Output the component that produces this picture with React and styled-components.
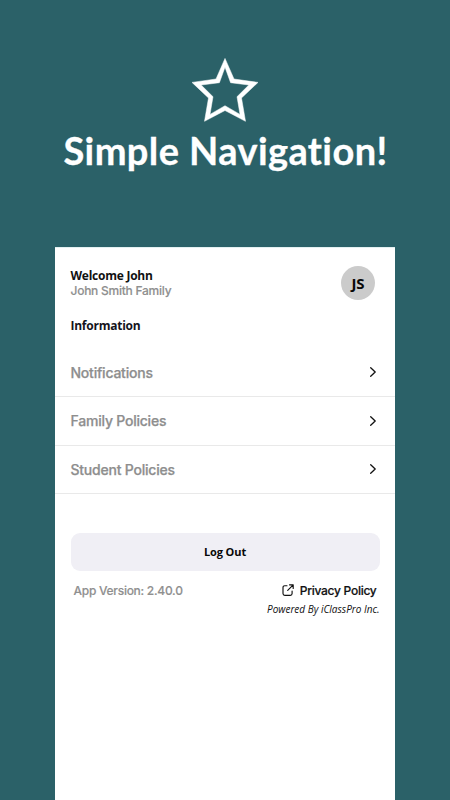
import styled, { createGlobalStyle } from "styled-components";

const GlobalStyle = createGlobalStyle`
    * {
        box-sizing: border-box;
    }
    body {
        margin: 0;
        background-color: #2b6168;
        font-family: "Open Sans", sans-serif;
    }
`;

const Page = styled.main`
    display: flex;
    flex-direction: column;
    align-items: center;
    height: 800px;
    overflow: hidden;
    background-color: #2b6168;
`;

const Hero = styled.header`
    display: flex;
    flex-direction: column;
    align-items: center;
    height: 247px;
    padding-top: 57px;
    color: #fff;
`;

const Title = styled.h1`
    margin: 4px 0 0;
    padding-left: 1px;
    font-family: Lato, sans-serif;
    font-size: 38px;
    font-weight: 700;
    line-height: 46px;
    letter-spacing: 0.4px;
    white-space: nowrap;
    -webkit-text-stroke: 0.3px #fff;
`;

const Panel = styled.section`
    width: 340px;
    flex: 1;
    background-color: #fff;
    border-top: 1px solid #e3f0f1;
`;

const Account = styled.div`
    display: flex;
    justify-content: space-between;
    height: 70px;
    padding: 17px 20px 0 15.5px;
`;

const Welcome = styled.div`
    padding-top: 3px;
    color: #111;
    font-size: 12px;
    font-weight: 700;
    line-height: 16px;
    letter-spacing: -0.25px;
`;

const Family = styled.div`
    color: #8f8f8f;
    font-family: Inter, sans-serif;
    font-size: 12px;
    font-weight: 500;
    line-height: 14px;
    letter-spacing: -0.25px;
    -webkit-text-stroke: 0.15px #8f8f8f;
`;

const Avatar = styled.div`
    display: flex;
    align-items: center;
    justify-content: center;
    width: 34px;
    height: 34px;
    margin-top: 0.5px;
    border-radius: 50%;
    background-color: #cbcbcb;
    color: #080808;
    font-size: 15px;
    font-weight: 700;
`;

const SectionTitle = styled.h2`
    margin: 0;
    padding-left: 15.5px;
    color: #14141c;
    font-size: 12px;
    font-weight: 700;
    line-height: 16px;
    letter-spacing: -0.25px;
`;

const Menu = styled.nav`
    margin-top: 14px;
`;

const MenuRow = styled.a`
    display: flex;
    align-items: center;
    justify-content: space-between;
    height: ${(props) => props.$height}px;
    padding: 0 18px 0 15.5px;
    border-bottom: 1px solid #e9e9e9;
    color: #8e8e8e;
    font-family: Inter, sans-serif;
    font-size: 14px;
    font-weight: 500;
    line-height: 17px;
    letter-spacing: -0.22px;
    -webkit-text-stroke: 0.25px #8e8e8e;
`;

const LogOut = styled.button`
    display: block;
    width: 309px;
    height: 38px;
    margin: 39px 0 0 16px;
    padding: 0 1px 2px 0;
    border: 0;
    border-radius: 9px;
    background-color: #f0eff5;
    color: #080808;
    font-family: "Open Sans", sans-serif;
    font-size: 11px;
    font-weight: 700;
    letter-spacing: -0.1px;
`;

const Footer = styled.footer`
    padding: 10px 15.5px 0 18.5px;
`;

const FooterRow = styled.div`
    display: flex;
    align-items: center;
    justify-content: space-between;
    height: 18px;
    padding-right: 3px;
    font-family: Inter, sans-serif;
    font-size: 12px;
    font-weight: 500;
    letter-spacing: -0.27px;
`;

const Version = styled.span`
    color: #8f8f8f;
    -webkit-text-stroke: 0.15px #8f8f8f;
`;

const Policy = styled.a`
    display: flex;
    align-items: center;
    gap: 6px;
    color: #111;
    -webkit-text-stroke: 0.2px #111;
`;

const Powered = styled.div`
    margin-top: 3px;
    color: #111;
    font-size: 10px;
    font-style: italic;
    line-height: 14px;
    text-align: right;
`;

function Star() {
    return (
        <svg width="68" height="66" viewBox="0 0 68 66" fill="currentColor">
            <path
                fillRule="evenodd"
                stroke="currentColor"
                strokeWidth="0.5"
                d="M34 1.4 43 22 67 25.4 50.5 41 54.5 64.3 34 53.5 13.5 64.3 17.5 41 1 25.4 25 22ZM34 10.2 28.4 25.7 10.2 28 22 39.7 19 57.4 34 48.7 49 57.4 46 39.7 57.8 28 39.6 25.7Z"
            />
        </svg>
    );
}

function Chevron() {
    return (
        <svg width="8" height="12" viewBox="0 0 8 12" fill="none">
            <path
                d="M1.7 1.7 6.2 6 1.7 10.3"
                stroke="#111"
                strokeWidth="1.3"
                strokeLinecap="round"
                strokeLinejoin="round"
            />
        </svg>
    );
}

function ExternalLink() {
    return (
        <svg
            width="12"
            height="12"
            viewBox="0 0 12 12"
            fill="none"
            stroke="#111"
            strokeWidth="1.15"
            strokeLinecap="round"
            strokeLinejoin="round"
        >
            <path d="M5 1.7H2.8Q1 1.7 1 3.5V9.5Q1 11.3 2.8 11.3H8.3Q10.1 11.3 10.1 9.5V7" />
            <path d="M7.5.8H11.2V4.5M11.2.8 5.7 6.3" />
        </svg>
    );
}

const menuItems = [
    { label: "Notifications", height: 49 },
    { label: "Family Policies", height: 48.5 },
    { label: "Student Policies", height: 48.5 },
];

function App() {
    return (
        <>
            <GlobalStyle />
            <Page>
                <Hero>
                    <Star />
                    <Title>Simple Navigation!</Title>
                </Hero>
                <Panel>
                    <Account>
                        <div>
                            <Welcome>Welcome John</Welcome>
                            <Family>John Smith Family</Family>
                        </div>
                        <Avatar>JS</Avatar>
                    </Account>
                    <SectionTitle>Information</SectionTitle>
                    <Menu>
                        {menuItems.map((item) => (
                            <MenuRow key={item.label} $height={item.height}>
                                {item.label}
                                <Chevron />
                            </MenuRow>
                        ))}
                    </Menu>
                    <LogOut>Log Out</LogOut>
                    <Footer>
                        <FooterRow>
                            <Version>App Version: 2.40.0</Version>
                            <Policy>
                                <ExternalLink />
                                Privacy Policy
                            </Policy>
                        </FooterRow>
                        <Powered>Powered By iClassPro Inc.</Powered>
                    </Footer>
                </Panel>
            </Page>
        </>
    );
}

export default App;
